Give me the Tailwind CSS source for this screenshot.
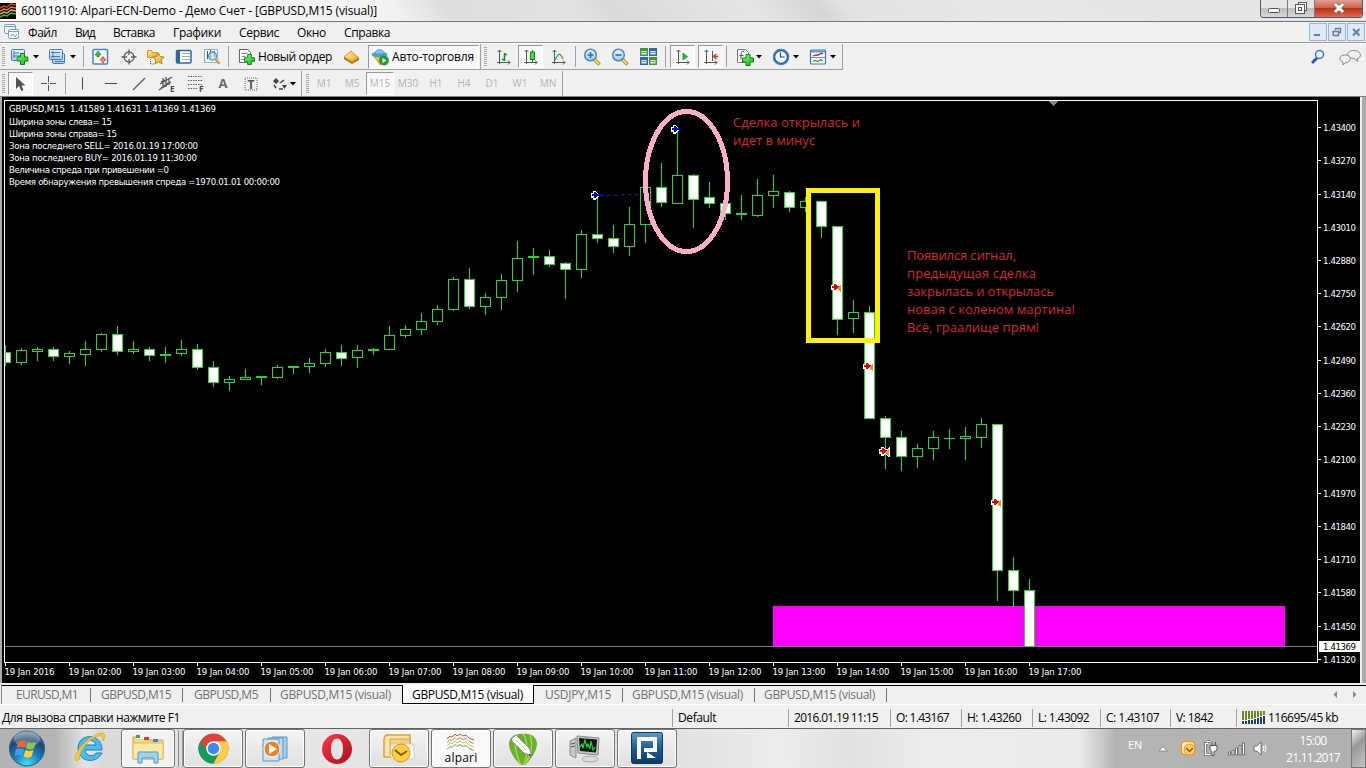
<!DOCTYPE html>
<html lang="ru">
<head>
<meta charset="utf-8">
<title>60011910: Alpari-ECN-Demo</title>
<script src="https://cdn.jsdelivr.net/npm/@tailwindcss/browser@4"></script>
</head>
<body class="w-[1366px] h-[768px] overflow-hidden bg-[#f0f0f0] font-['Open_Sans','Noto_Sans',sans-serif] text-[12px] text-black flex flex-col whitespace-nowrap">
<svg class="absolute w-0 h-0">
  <defs>
    <linearGradient id="gb" x1="0" y1="0" x2="0" y2="1"><stop offset="0" stop-color="#e8f3fd"/><stop offset="1" stop-color="#a9cbea"/></linearGradient>
    <linearGradient id="gg" x1="0" y1="0" x2="1" y2="1"><stop offset="0" stop-color="#7dff7d"/><stop offset="1" stop-color="#0bb80b"/></linearGradient>
    <linearGradient id="gy" x1="0" y1="0" x2="1" y2="1"><stop offset="0" stop-color="#fff0a0"/><stop offset="1" stop-color="#dfa318"/></linearGradient>
    <radialGradient id="orb" cx=".5" cy=".95" r=".95"><stop offset="0" stop-color="#3fe0ff"/><stop offset=".4" stop-color="#1b7fb8"/><stop offset=".75" stop-color="#1d4670"/><stop offset="1" stop-color="#7e9cb4"/></radialGradient>
    <linearGradient id="blu" x1="0" y1="0" x2="0" y2="1"><stop offset="0" stop-color="#5d9cc8"/><stop offset=".5" stop-color="#1f5d94"/><stop offset="1" stop-color="#0c3a68"/></linearGradient>
    <linearGradient id="red" x1="0" y1="0" x2="1" y2="1"><stop offset="0" stop-color="#ff3a46"/><stop offset="1" stop-color="#a80c1c"/></linearGradient>
    <symbol id="plus" viewBox="0 0 12 12"><path d="M4 .5h4v3.500h3.500v4H8v3.500H4V8H.5V4H4z" fill="url(#gg)" stroke="#0a7d14"/></symbol>
    <symbol id="axes"><path d="M3.500 1v14M1 13.500h13M1.500 3l2-2 2 2M12 11.500l2 2-2 2" fill="none" stroke="#555"/></symbol>
    <symbol id="lens"><path d="M11 11l5.500 5.500" stroke="#b08520" stroke-width="3.500"/><path d="M11 11l5 5" stroke="#ffe04a" stroke-width="1.800"/><circle cx="7.500" cy="7" r="5.800" fill="url(#gb)" stroke="#4a8ac4" stroke-width="1.500"/></symbol>
  </defs>
</svg>

<!-- title bar -->
<header class="h-[21px] shrink-0 flex items-center relative bg-[linear-gradient(52deg,#f8f8f8_0%,#f2f2f2_29%,#dedede_33%,#e2e2e2_42%,#dadada_45%,#e6e6e6_55%,#d6d6d6_60%,#e3e3e3_62%,#e8e8e8_72%,#e4e4e4_100%)]">
  <svg class="w-4 h-4 mt-[1px]" viewBox="0 0 16 16"><rect width="16" height="16" fill="#080808"/><g fill="none" stroke-width="1.500"><path d="M0 5l4-2 3 1 4-3 5 1" stroke="#d8451c"/><path d="M0 8l4-2 3 1 4-3 5 1" stroke="#e08020"/><path d="M0 11l4-2 3 1 4-3 5 1" stroke="#d6b525"/><path d="M0 14l4-2 3 1 4-3 5 1" stroke="#4faf28"/></g></svg>
  <span class="ml-[5px] leading-[20px]" data-w="356">60011910: Alpari-ECN-Demo - Демо Счет - [GBPUSD,M15 (visual)]</span>
  <div class="absolute right-[3px] top-0 h-[18px] flex border border-t-0 border-[#555a66] rounded-b-[4px] overflow-hidden">
    <div class="w-[27px] bg-[linear-gradient(#e6e6e6_0_45%,#bcbec2_50%,#d5d6da)] border-r border-[#777b84] grid place-items-center"><svg width="14" height="16"><rect x="1.500" y="7.500" width="11" height="4" rx="1" fill="#fff" stroke="#555"/></svg></div>
    <div class="w-[27px] bg-[linear-gradient(#e6e6e6_0_45%,#bcbec2_50%,#d5d6da)] border-r border-[#777b84] grid place-items-center"><svg width="14" height="16" fill="#f6f6f6" stroke="#555"><rect x="4.500" y="1.500" width="8" height="8"/><rect x="1.500" y="3.500" width="9" height="9"/><rect x="4.500" y="6.500" width="3" height="3"/></svg></div>
    <div class="w-[47px] bg-[linear-gradient(#e0a095,#d0604c_45%,#bb3018_50%,#dd6a50)] grid place-items-center"><svg width="14" height="16"><path d="M3 3l8 8M11 3l-8 8" stroke="#664" stroke-width="4.500"/><path d="M3 3l8 8M11 3l-8 8" stroke="#fff" stroke-width="3"/></svg></div>
  </div>
</header>

<!-- menu -->
<nav class="h-[22px] shrink-0 border-t border-b border-t-[#777] border-b-[#989898] flex items-center relative pt-[1px]">
  <svg class="w-[16px] h-[16px] ml-[4px] mr-[8px] mb-[1px]" viewBox="0 0 16 16" fill="#fff" stroke="#6da3dc"><rect x=".5" y=".5" width="11" height="9" rx="1.500"/><path d="M1 2.500h10"/><rect x="4.500" y="5.500" width="10" height="9" rx="1.500"/><path d="M5 7.500h9M6 11l2 1 1-2 2 3 2-3" fill="none"/></svg>
  <span class="w-[47px]" data-w="29">Файл</span><span class="w-[38px]" data-w="20">Вид</span><span class="w-[60px]" data-w="42">Вставка</span><span class="w-[66px]" data-w="48">Графики</span><span class="w-[58px]" data-w="40">Сервис</span><span class="w-[47px]" data-w="29">Окно</span><span class="w-[60px]" data-w="46">Справка</span>
  <div class="absolute right-[1px] top-[1px] flex gap-[1px] text-[#6b7d90]">
    <svg width="18" height="18"><rect x=".5" y=".5" width="17" height="17" fill="#dbeafa" stroke="#9db4cc"/><path d="M5 12h6" stroke="currentColor" stroke-width="2"/></svg>
    <svg width="18" height="18"><rect x=".5" y=".5" width="17" height="17" fill="#dbeafa" stroke="#9db4cc"/><path d="M7.500 7V5.500h5v4H11M5 8.500h5.500v4h-5z" fill="none" stroke="currentColor" stroke-width="1.500"/></svg>
    <svg width="18" height="18"><rect x=".5" y=".5" width="17" height="17" fill="#dbeafa" stroke="#9db4cc"/><path d="M6 6l6.500 6.500M12.500 6L6 12.500" stroke="currentColor" stroke-width="2"/></svg>
  </div>
</nav>

<!-- standard toolbar -->
<div class="h-[27px] shrink-0 flex items-stretch border-t border-white relative">
 <div class="w-[843px] flex items-center border-b border-r border-[#a0a0a0] *:shrink-0">
  <i class="ml-[2px] mr-[5px] w-[3px] h-[19px] bg-[repeating-linear-gradient(#a8a8a8_0_1px,#f0f0f0_1px_2px)]"></i>
  <svg width="20" height="18" viewBox="0 0 20 18"><rect x="1.500" y="1.500" width="13" height="11" rx="1" fill="url(#gb)" stroke="#3f78b5"/><path d="M4 3v7M3 8h8M4 5h5" stroke="#4a7fb5"/><use href="#plus" x="6.500" y="5" width="12" height="12"/></svg>
  <svg class="ml-[3px] mr-[9px]" width="6" height="4"><path d="M0 0h6l-3 3.500z"/></svg>
  <svg width="20" height="18" viewBox="0 0 20 18" fill="url(#gb)" stroke="#3f78b5"><rect x="4.500" y="5.500" width="12" height="10" rx="1"/><rect x="1.500" y="1.500" width="13" height="10" rx="1"/><path d="M3 4.500h9M3 8.500h9M5 3v7M7 13.500h9"/></svg>
  <svg class="ml-[2px] mr-[6px]" width="6" height="4"><path d="M0 0h6l-3 3.500z"/></svg>
  <i class="w-px h-[21px] bg-[#a0a0a0] ml-[1px] mr-[8px]"></i>
  <svg width="17" height="18" viewBox="0 0 17 18"><rect x="1" y="1.500" width="14.500" height="14.500" rx="1" fill="#fff" stroke="#3f86c8" stroke-width="1.500"/><path d="M3 7l3-4 3 4H7v2H5V7z" fill="#3bc43b" stroke="#168018" stroke-width=".7"/><path d="M8 11l3 4 3-4h-2V9h-2v2z" fill="#ff8a62" stroke="#c03010" stroke-width=".7"/></svg>
  <svg class="ml-[11px]" width="18" height="18" fill="none" stroke="#606060" stroke-width="1.300"><circle cx="9" cy="9" r="5"/><path d="M9 1.500V7M9 11v5.500M1.500 9H7M11 9h5.500"/></svg>
  <svg class="ml-[8px]" width="20" height="18" viewBox="0 0 20 18"><path d="M1.500 2.500h4l1 2h5v5h-10z" fill="url(#gy)" stroke="#c89a20"/><path d="M4.500 11v5h5" fill="none" stroke="#555" stroke-dasharray="1 1"/><path d="M12.500 5l1.700 3.600 4 .5-3 2.700.8 4-3.500-2-3.500 2 .8-4-3-2.700 4-.5z" fill="url(#gy)" stroke="#b8841a"/></svg>
  <svg class="ml-[9px]" width="18" height="18"><rect x="1.500" y="2.500" width="14.500" height="12.500" rx="1" fill="#fff" stroke="#2b66a8" stroke-width="1.500"/><path d="M3.500 3v12" stroke="#2b66a8" stroke-width="3"/><path d="M7 5.500h8M7 8.500h8M7 11.500h8" stroke="#9ab0c8"/></svg>
  <svg class="ml-[10px]" width="19" height="18"><rect x="1.500" y="1.500" width="13" height="13" fill="#f2f8fd" stroke="#8fb2d4"/><path d="M4.500 3v8M7.500 2v9M11.500 3v6" stroke="#555"/><circle cx="9.500" cy="8" r="4" fill="#bcdcf4aa" stroke="#5b90c4" stroke-width="1.300"/><path d="M12.500 11l4 5" stroke="#d9a521" stroke-width="2.500"/></svg>
  <i class="w-px h-[21px] bg-[#a0a0a0] ml-[6px] mr-[9px]"></i>
  <svg width="18" height="18"><path d="M1.500 1.500h8l3 3v10h-11z" fill="#fff" stroke="#666"/><path d="M3.500 5.500h6M3.500 8.500h4M3.500 11.500h3" stroke="#888"/><use href="#plus" x="6" y="6" width="11" height="11"/></svg>
  <span class="ml-[2px] w-[74px]" data-w="74">Новый ордер</span>
  <svg class="ml-[11px]" width="18" height="18"><path d="M1 9l7-6 8 7v2l-7 4-8-5z" fill="#a97212"/><path d="M1 9l7-6 8 7-7 4z" fill="url(#gy)" stroke="#c48a1a" stroke-width=".7"/></svg>
  <div class="ml-[7px] w-[111px] h-[24px] flex items-center border border-[#9a9a9a] border-r-white border-b-white bg-[#f8f8f8] pl-[2px]">
    <svg width="19" height="18"><path d="M2 7l7 10 6-9z" fill="#f4c828" stroke="#b88a18" stroke-width=".7"/><ellipse cx="8.500" cy="6.500" rx="8" ry="3" fill="#4ba2d8"/><path d="M4 6c0-6 9-6 9 0z" fill="#7cc6ec" stroke="#3a8cc4" stroke-width=".7"/><circle cx="13" cy="12.500" r="4.500" fill="#18a828" stroke="#0c7a18" stroke-width=".7"/><path d="M11.500 10l4 2.500-4 2.500z" fill="#fff"/></svg>
    <span class="ml-[2px]" data-w="82">Авто-торговля</span>
  </div>
  <i class="w-px h-full bg-[#a0a0a0] ml-[1px]"></i>
  <i class="ml-[3px] mr-[9px] w-[3px] h-[19px] bg-[repeating-linear-gradient(#a8a8a8_0_1px,#f0f0f0_1px_2px)]"></i>
  <svg width="16" height="16"><use href="#axes"/><path d="M8.500 4v8M6 10.500h2M9 5.500h2" stroke="#138a20" stroke-width="1.500"/></svg>
  <div class="ml-[6px] w-[25px] h-[23px] grid place-items-center border border-[#9a9a9a] border-r-white border-b-white bg-[#f8f8f8]"><svg width="16" height="16"><use href="#axes"/><path d="M9.500 1v12" stroke="#138a20"/><rect x="7.500" y="3" width="4" height="7.500" fill="#4ae04a" stroke="#138a20"/></svg></div>
  <svg class="ml-[8px]" width="16" height="16"><use href="#axes"/><path d="M4 11c4-8 5-7 8-1" stroke="#3fa84a" fill="none" stroke-width="1.300"/></svg>
  <i class="w-px h-[21px] bg-[#a0a0a0] ml-[8px] mr-[7px]"></i>
  <svg width="18" height="18"><use href="#lens"/><path d="M4.500 7h6M7.500 4v6" stroke="#2a70b8" stroke-width="1.600"/></svg>
  <svg class="ml-[10px]" width="18" height="18"><use href="#lens"/><path d="M4.500 7h6" stroke="#2a70b8" stroke-width="1.600"/></svg>
  <svg class="ml-[11px]" width="17" height="17"><path d="M0 0h8v8H0zM9 9h8v8H9z" fill="#3f9a2c"/><path d="M9 0h8v8H9zM0 9h8v8H0z" fill="#2b66b8"/><path d="M1.500 3h5v3.500h-5zM10.500 3h5v3.500h-5zM1.500 12h5v3.500h-5zM10.500 12h5v3.500h-5z" fill="#e8f2e4"/><path d="M2 4.500h4M11 4.500h4M2 13.500h4M11 13.500h4" stroke="#7a9a80"/></svg>
  <i class="w-px h-[21px] bg-[#a0a0a0] ml-[8px] mr-[4px]"></i>
  <div class="w-[25px] h-[23px] grid place-items-center border border-[#9a9a9a] border-r-white border-b-white bg-[#f8f8f8]"><svg width="16" height="16"><use href="#axes"/><path d="M8 4l4.500 3.500L8 11z" fill="#28b83a" stroke="#138a20" stroke-width=".7"/></svg></div>
  <div class="ml-[3px] w-[25px] h-[23px] grid place-items-center border border-[#9a9a9a] border-r-white border-b-white bg-[#f8f8f8]"><svg width="16" height="16"><use href="#axes"/><path d="M9.500 2v10" stroke="#555"/><path d="M15 7.500h-4M13.500 5l-3 2.500 3 2.500" stroke="#c8401c" stroke-width="1.500" fill="none"/></svg></div>
  <i class="w-px h-[21px] bg-[#a0a0a0] ml-[3px] mr-[9px]"></i>
  <svg width="18" height="18"><path d="M1.500 1.500h8l3 3v10h-11z" fill="#fff" stroke="#777"/><path d="M8 3.500c-3-1-3 1-3 7l-1 1M3.500 7.500h4" stroke="#555" fill="none"/><use href="#plus" x="6" y="6" width="12" height="12"/></svg>
  <svg class="ml-[2px]" width="6" height="4"><path d="M0 0h6l-3 3.500z"/></svg>
  <svg class="ml-[10px]" width="18" height="18"><circle cx="9" cy="9" r="7" fill="#f2f8fe" stroke="#1c62b4" stroke-width="2.500"/><circle cx="9" cy="9" r="7.500" fill="none" stroke="#5aa4e4" stroke-width=".7"/><path d="M8.500 4.500V9h4" stroke="#345" fill="none" stroke-width="1.200"/></svg>
  <svg class="ml-[3px]" width="6" height="4"><path d="M0 0h6l-3 3.500z"/></svg>
  <svg class="ml-[10px]" width="18" height="18"><rect x="1.500" y="2" width="15" height="14" rx="1" fill="#fff" stroke="#3a76b8" stroke-width="1.200"/><path d="M2 3.500h14" stroke="#5a96d4" stroke-width="2"/><path d="M4 8l3-1h2l3-1.500h2" stroke="#b02818" fill="none" stroke-width="1.300"/><path d="M2 9.500h14" stroke="#88a"/><path d="M4 13.500l2-1 3 1 3-2 2 1.500" stroke="#28a050" fill="none" stroke-width="1.300"/></svg>
  <svg class="ml-[3px]" width="6" height="4"><path d="M0 0h6l-3 3.500z"/></svg>
 </div>
 <div class="ml-auto mr-[4px] flex items-center gap-[12px]">
  <svg width="16" height="16"><path d="M2 14l5-5" stroke="#2456c0" stroke-width="2.800"/><circle cx="9.500" cy="5.500" r="4" fill="#f2f6ff" stroke="#3f72d8" stroke-width="1.500"/></svg>
  <svg width="24" height="18" fill="#f0f0f2" stroke="#8a8a8a"><path d="M16 2.500c8 0 8 7.500 3 8l1 3-4-3C7 10 8 2.500 16 2.500z"/><path d="M7 7c7 0 7 7 1 7.500L5 17v-3C0 12 1 7 7 7z"/></svg>
 </div>
</div>

<!-- line studies and periods toolbar -->
<div class="h-[26px] shrink-0 flex items-center text-[#6a6a6a] pt-[1px]">
  <i class="ml-[2px] mr-[3px] w-[3px] h-[19px] bg-[repeating-linear-gradient(#a8a8a8_0_1px,#f0f0f0_1px_2px)]"></i>
  <div class="w-[25px] h-[23px] grid place-items-center border border-[#9a9a9a] border-r-white border-b-white bg-[#f8f8f8]"><svg width="12" height="16"><path d="M1 1v12l3-3 2.500 5 2-1L6.500 9.500h4z" fill="#505050"/></svg></div>
  <svg class="ml-[7px]" width="17" height="17" stroke="#555"><path d="M8.500 1v6M8.500 10v6M1 8.500h6M10 8.500h6M8.500 8v1"/></svg>
  <i class="w-px h-[21px] bg-[#a0a0a0] ml-[8px] mr-[8px]"></i>
  <svg width="17" height="17" stroke="#444"><path d="M8.500 2.500v12"/></svg>
  <svg class="ml-[12px]" width="17" height="17" stroke="#444"><path d="M2 8.500h12"/></svg>
  <svg class="ml-[11px]" width="17" height="17" stroke="#555"><path d="M2 15L14 3" stroke-width="1.200"/></svg>
  <svg class="ml-[10px]" width="19" height="18" stroke="#555"><path d="M2 9L14 2M1 15l12-8M5 3v10M8 2v10M11 3v7M3 7l4-2M3 13l7-5" fill="none" stroke-width="1.300"/><text x="12" y="17" font-size="8" font-weight="700" fill="#444" stroke="none">E</text></svg>
  <svg class="ml-[10px]" width="19" height="18"><path d="M1 1.500h14M1 5.500h14M1 9.500h14M1 13.500h9" stroke="#666" stroke-dasharray="1.500 1"/><text x="12" y="17" font-size="8" font-weight="700" fill="#444">F</text></svg>
  <span class="ml-[11px] text-[13px] font-bold w-[12px] text-center">A</span>
  <svg class="ml-[14px]" width="16" height="16"><rect x="2" y="2" width="12" height="12" fill="none" stroke="#666" stroke-dasharray="1 1"/><text x="4.500" y="13" font-size="12" font-weight="700" fill="#555">T</text></svg>
  <svg class="ml-[12px]" width="17" height="16" fill="#444"><path d="M5 2l3 3-3 3-3-3zM11 9h5l-2.500 4z"/><path d="M3 9l2 3M9 7l4-3M8 13h4" stroke="#444" stroke-width="1.500"/></svg>
  <svg class="ml-[2px] mr-[5px]" width="6" height="4"><path d="M0 0h6l-3 3.500z" fill="#000"/></svg>
  <i class="w-px h-full bg-[#a0a0a0]"></i>
  <i class="ml-[4px] mr-[1px] w-[3px] h-[19px] bg-[repeating-linear-gradient(#a8a8a8_0_1px,#f0f0f0_1px_2px)]"></i>
  <div class="flex h-full items-center text-[10px] text-[#b4b4b4] border-r border-[#a0a0a0] *:w-[28px] *:text-center">
    <span>M1</span><span>M5</span><span class="h-[23px] leading-[21px] border border-[#9a9a9a] border-r-white border-b-white bg-[#f8f8f8]">M15</span><span>M30</span><span>H1</span><span>H4</span><span>D1</span><span>W1</span><span>MN</span>
  </div>
</div>

<!-- chart window -->
<main class="h-[588px] shrink-0 flex border-t border-[#808080] bg-[#ababab]">
  <svg id="chart" class="font-['DejaVu_Sans_Condensed','DejaVu_Sans',sans-serif]" width="1366" height="587" viewBox="0 97 1366 587" font-size="9.500" fill="#fff" shape-rendering="crispEdges">
    <rect x="2" y="97" width="1359" height="586" fill="#000"/>
    <rect x="1360" y="97" width="2" height="587" fill="#f0f0f0"/>
    <rect x="0" y="683" width="1366" height="1" fill="#f0f0f0"/>
    <rect x="773" y="606" width="512" height="40" fill="#f0f"/>
    <rect x="5" y="646" width="1312" height="1" fill="#778088"/>
    <path d="M1049 101h9v1h-1v1h-1v1h-1v1h-1v1h-1v-1h-1v-1h-1v-1h-1v-1h-1z" fill="#778899"/>
    <g id="candles"></g>
    <path d="M4.500 662.500v-562h1313v562z" fill="none" stroke="#fff"/>
    <g id="axis"></g>
    <g>
      <text x="9" y="112" textLength="207" xml:space="preserve">GBPUSD,M15  1.41589 1.41631 1.41369 1.41369</text>
      <text x="9" y="125" textLength="103">Ширина зоны слева= 15</text>
      <text x="9" y="137" textLength="108">Ширина зоны справа= 15</text>
      <text x="9" y="149" textLength="189">Зона последнего SELL= 2016.01.19 17:00:00</text>
      <text x="9" y="161" textLength="188">Зона последнего BUY= 2016.01.19 11:30:00</text>
      <text x="9" y="173" textLength="160">Величина спреда при привешении =0</text>
      <text x="9" y="185" textLength="271">Время обнаружения превышения спреда =1970.01.01 00:00:00</text>
    </g>
    <path d="M600 195.500L644 194.500" stroke="#1010c8" stroke-dasharray="4 3"/>
    <g id="marks"></g>
    <ellipse cx="686.500" cy="181.500" rx="41" ry="70" fill="none" stroke="#ffaec9" stroke-width="5"/>
    <rect x="808.500" y="190.500" width="69" height="150" fill="none" stroke="#fff200" stroke-width="5"/>
    <g class="font-['Open_Sans','Noto_Sans',sans-serif]" font-size="13" fill="#dc2329">
      <text x="733" y="127" textLength="127">Сделка открылась и</text>
      <text x="733" y="145" textLength="82">идет в минус</text>
      <text x="907" y="260" textLength="109">Появился сигнал,</text>
      <text x="907" y="278" textLength="129">предыдущая сделка</text>
      <text x="907" y="296" textLength="147">закрылась и открылась</text>
      <text x="907" y="314" textLength="168">новая с коленом мартина!</text>
      <text x="907" y="332" textLength="132">Всё, граалище прям!</text>
    </g>
  </svg>
</main>

<!-- chart tabs -->
<div class="h-[21px] shrink-0 flex text-[#707070] border-b border-white relative">
  <i class="w-[2px] border-r border-[#888]"></i>
  <div class="flex w-[400px] items-center border-t border-black mt-[1px]">
    <span class="ml-[14px] w-[74px]" data-w="62">EURUSD,M1</span><i class="w-px h-[14px] bg-[#777] mr-[10px]"></i>
    <span class="w-[81px]" data-w="70">GBPUSD,M15</span><i class="w-px h-[14px] bg-[#777] mr-[11px]"></i>
    <span class="w-[76px]" data-w="64">GBPUSD,M5</span><i class="w-px h-[14px] bg-[#777] mr-[9px]"></i>
    <span data-w="111">GBPUSD,M15 (visual)</span>
  </div>
  <div class="w-[132px] h-[19px] mt-[1px] bg-white border border-t-0 border-black text-black flex items-center pl-[9px] pt-[2px]"><span data-w="111">GBPUSD,M15 (visual)</span></div>
  <div class="flex flex-1 items-center border-t border-black mt-[1px]">
    <span class="ml-[11px] w-[77px]" data-w="66">USDJPY,M15</span><i class="w-px h-[14px] bg-[#777] mr-[9px]"></i>
    <span class="w-[122px]" data-w="111">GBPUSD,M15 (visual)</span><i class="w-px h-[14px] bg-[#777] mr-[9px]"></i>
    <span class="w-[122px]" data-w="111">GBPUSD,M15 (visual)</span><i class="w-px h-[14px] bg-[#777]"></i>
    <svg class="ml-auto mr-[8px] mb-[2px]" width="25" height="7" fill="#888"><path d="M4 0v7L.5 3.500zM20 0v7l3.500-3.500z"/></svg>
  </div>
</div>

<!-- status bar -->
<div class="h-[23px] shrink-0 flex items-center pl-[2px] pt-[2px] *:shrink-0">
  <span class="w-[670px]" data-w="178">Для вызова справки нажмите F1</span><i class="w-px h-[18px] bg-[#a0a0a0] mr-[5px]"></i>
  <span class="w-[110px]" data-w="38">Default</span><i class="w-px h-[18px] bg-[#a0a0a0] mr-[5px]"></i>
  <span class="w-[96px]" data-w="84">2016.01.19 11:15</span><i class="w-px h-[18px] bg-[#a0a0a0] mr-[5px]"></i>
  <span class="w-[65px]" data-w="53">O: 1.43167</span><i class="w-px h-[18px] bg-[#a0a0a0] mr-[5px]"></i>
  <span class="w-[65px]" data-w="54">H: 1.43260</span><i class="w-px h-[18px] bg-[#a0a0a0] mr-[5px]"></i>
  <span class="w-[62px]" data-w="51">L: 1.43092</span><i class="w-px h-[18px] bg-[#a0a0a0] mr-[5px]"></i>
  <span class="w-[64px]" data-w="53">C: 1.43107</span><i class="w-px h-[18px] bg-[#a0a0a0] mr-[5px]"></i>
  <span class="w-[60px]" data-w="37">V: 1842</span><i class="w-px h-[18px] bg-[#a0a0a0] mr-[5px]"></i>
  <svg width="24" height="14" shape-rendering="crispEdges"><path d="M1 0v9M4 0v8.500M7 0v8M10 0v7.500M13 0v6.500M16 0v5.500M19 0v4.500M22 0v3.500" stroke="#6f8a1c" stroke-width="2"/><path d="M1 10v3M4 10v3M7 9v4M10 8.500v4.500M13 7.500v5.500M16 6.500v6.500M19 5.500v7.500M22 4.500v8.500" stroke="#17426a" stroke-width="2"/></svg>
  <span class="ml-[2px]" data-w="70">116695/45 kb</span>
</div>

<!-- taskbar -->
<footer class="h-[40px] shrink-0 border-t border-[#5c665c] flex items-center relative bg-[linear-gradient(90deg,#b2b2b2_0,#b4b4b4_55px,#e4e4e4_85px,#d9d9d9_100px,#e6e6e6_300px,#e2e2e2_680px,#ececec_780px,#e2e2e2_850px,#ececec_930px,#eaeaea_1080px,#b4b4b4_1115px,#b0b0b0_1366px)]">
  <svg class="ml-[8px]" width="38" height="39" viewBox="0 0 38 39"><circle cx="19" cy="19.500" r="17.500" fill="url(#orb)" stroke="#2d5878"/><ellipse cx="19" cy="10" rx="13" ry="8" fill="#ffffff40"/><path d="M10 13c3-2 5-2 8-.5L16.500 19c-3-1.500-5-1.500-8 0z" fill="#f0642c"/><path d="M19.500 13c3 1.500 5 1.500 8.500 0l-2 6.500c-3 1.500-5 1.500-8 0z" fill="#8cc63e"/><path d="M8 20.500c3-1.500 5-1.500 8 0L14.500 27c-3-1.500-5-1.500-8 0z" fill="#3ca0e8"/><path d="M17.500 21c3 1.500 5 1.500 8 0l-2 6.500c-3 1.500-5 1.500-8 0z" fill="#ffd034"/></svg>
  <svg class="ml-[27px] mb-[4px]" width="34" height="34" viewBox="0 0 34 34"><path d="M29 20H12c1 7 9 7 11 3h6C23 35 5 32 5 18 5 3 29 2 29 20zM12 15h11c-1-6-10-6-11 0z" fill="#4bbcec" stroke="#1c80be"/><path d="M3 31C-2 24 18 3 29 3c4 0 3 5 1 8 0-4-1-6-5-5C15 9 4 24 7 29z" fill="#f6cc3c" stroke="#d4a01c" stroke-width=".6"/></svg>
  <div class="ml-[14px] w-[54px] h-[39px] border border-[#747474] rounded-[3px] bg-[#f2f2f2] shadow-[inset_0_0_0_1px_#fff] grid place-items-center">
    <svg width="34" height="32" viewBox="0 0 34 32"><path d="M2 4h10l2 3h18v19H2z" fill="#f2d87a" stroke="#c8a848"/><path d="M5 2h9v4H5z" fill="#fff"/><path d="M5 2h4v3H5z" fill="#2ea84a"/><path d="M13 4h5v3h-5z" fill="#d83a2c"/><path d="M22 6h5v3h-5z" fill="#3a80d8"/><path d="M2 10h30v16H2z" fill="#faeaa4" stroke="#d8bc60"/><path d="M7 30V20q0-1 1-1h18q1 0 1 1v10h-4v-5H11v5z" fill="#9cd4f0" stroke="#4a9cc8"/></svg>
  </div>
  <i class="w-[4px] h-[39px] border-r border-[#888] rounded-r-[3px] bg-[#e4e4e4]"></i><i class="w-[4px] h-[39px] border-r border-[#999] rounded-r-[3px] bg-[#dedede] mr-[-1px]"></i>
  <div class="ml-[1px] w-[60px] h-[39px] border border-[#747474] rounded-[3px] bg-[linear-gradient(#f4f4f4,#e0e0e0)] shadow-[inset_0_0_0_1px_#fff] grid place-items-center">
    <svg width="31" height="31" viewBox="0 0 32 32"><circle cx="16" cy="16" r="15.500" fill="#db4437"/><path d="M2.600 8.200A15.500 15.500 0 0 0 16 31.500L22.100 19.500H9.900z" fill="#0f9d58"/><path d="M29.500 8.500H16a7.500 7.500 0 0 1 6.500 11L16 31.500A15.500 15.500 0 0 0 29.500 8.500z" fill="#ffcd40"/><circle cx="16" cy="16" r="7.500" fill="#fff"/><circle cx="16" cy="16" r="6" fill="#4285f4"/></svg>
  </div>
  <div class="ml-[2px] w-[60px] h-[39px] border border-[#747474] rounded-[3px] bg-[linear-gradient(#f4f4f4,#e0e0e0)] shadow-[inset_0_0_0_1px_#fff] grid place-items-center">
    <svg width="30" height="30" viewBox="0 0 30 30"><path d="M12 3h15v21H12z" fill="#a8d0ec" stroke="#5a96c4"/><path d="M8 4h15v21H8z" fill="#b8dcf2" stroke="#5a96c4"/><path d="M3 5h16v22H3z" fill="#c8e4f6" stroke="#5a96c4"/><circle cx="12" cy="15" r="8" fill="#f08020" stroke="#fff" stroke-width="1"/><path d="M9 10l8 5-8 5z" fill="#fff"/></svg>
  </div>
  <svg class="ml-[16px]" width="32" height="32" viewBox="0 0 32 32"><path fill-rule="evenodd" d="M16 1a15 15 0 1 0 0 30 15 15 0 1 0 0-30zm0 4.500c4 0 6 5 6 10.500s-2 10.500-6 10.500-6-5-6-10.500 2-10.500 6-10.500z" fill="url(#red)"/></svg>
  <div class="ml-[16px] w-[60px] h-[39px] border border-[#747474] rounded-[3px] bg-[linear-gradient(#f4f4f4,#e0e0e0)] shadow-[inset_0_0_0_1px_#fff] grid place-items-center">
    <svg width="34" height="32" viewBox="0 0 34 32"><path d="M6 2h22v22H2V7q0-5 4-5z" fill="#f8e4b0" stroke="#e0a030" stroke-width="1.500"/><path d="M8 6h20v16H8z" fill="#f6d080" stroke="#e0a030"/><path d="M9 11h23v15H9z" fill="#fff" stroke="#ccc"/><path d="M9 11l11.500 8L32 11" stroke="#ccc" fill="none"/><circle cx="19" cy="20" r="9" fill="#fcd040" stroke="#d89818"/><path d="M13 17l6 5 6-4" stroke="#8a5c10" stroke-width="2" fill="none"/></svg>
  </div>
  <div class="ml-[2px] w-[60px] h-[39px] border border-[#747474] rounded-[3px] bg-[#fafafa] shadow-[inset_0_0_0_1px_#fff] flex flex-col items-center">
    <svg class="mt-[3px] shrink-0" width="30" height="18" fill="none" stroke-width=".9"><path d="M1 6l3-3 2 1 3-3 2 2 3-2 3 2 3-1 3 3 5 2" stroke="#c83a20"/><path d="M1 9.500l3-3 2 1 3-3 2 2 3-2 3 2 3-1 3 3 5 2" stroke="#e08030"/><path d="M1 13l3-3 2 1 3-3 2 2 3-2 3 2 3-1 3 3 5 2" stroke="#d8b838"/><path d="M1 16.500l3-3 2 1 3-3 2 2 3-2 3 2 3-1 3 3 5 2" stroke="#4fa040"/></svg>
    <span class="text-[12px] leading-[13px]" data-w="33">alpari</span>
  </div>
  <div class="ml-[2px] w-[60px] h-[39px] border border-[#747474] rounded-[3px] bg-[linear-gradient(#f4f4f4,#e0e0e0)] shadow-[inset_0_0_0_1px_#fff] grid place-items-center">
    <svg width="32" height="34" viewBox="0 0 32 34"><path d="M16 2c8-1 14 3 14 10S22 30 18 33h-4C10 30 2 20 2 12 2 5 9 1 16 2z" fill="#6cb02c"/><path d="M16 2c5 5 5 25 0 31M10 3C6 12 10 26 14 33M23 3c4 9 0 22-5 30" stroke="#a8dc60" fill="none" stroke-width="1.300"/><path d="M5 6l4-3 13 13 3 8-8-3L5 9z" fill="#fff" stroke="#668" stroke-width=".6"/><path d="M9 8l10 10" stroke="#ccc"/><path d="M22.500 21.500l2.500 2.500-3.500-1z" fill="#333"/></svg>
  </div>
  <div class="ml-[2px] w-[60px] h-[39px] border border-[#747474] rounded-[3px] bg-[linear-gradient(#f4f4f4,#e0e0e0)] shadow-[inset_0_0_0_1px_#fff] grid place-items-center">
    <svg width="34" height="32" viewBox="0 0 34 32"><path d="M2 8l6-3v20l-6-3z" fill="#c8c8c8" stroke="#888"/><path d="M3 11l4-1M3 14l4-1" stroke="#555"/><path d="M9 3l22 2-1 17-20-2z" fill="#c4c8cc" stroke="#888"/><path d="M11 5l18 1.500-1 13-16-1.500z" fill="#0c1a10"/><path d="M12 14l2-3 1 4 2-8 2 7 1-3 2 5 1-8 2 9 2-3" stroke="#22d84a" fill="none" stroke-width="1.100"/><ellipse cx="22" cy="26" rx="8" ry="3" fill="#dcdcdc" stroke="#aaa"/></svg>
  </div>
  <div class="ml-[2px] w-[60px] h-[39px] border border-[#747474] rounded-[3px] bg-[linear-gradient(#f4f4f4,#e0e0e0)] shadow-[inset_0_0_0_1px_#fff] grid place-items-center">
    <svg width="32" height="33"><rect x=".5" y=".5" width="31" height="31" rx="2" fill="url(#blu)" stroke="#0c3a68"/><path d="M8 27V7h16v11H13" fill="none" stroke="#fff" stroke-width="4"/><path d="M16 20l9 6h-9z" fill="#fff"/></svg>
  </div>
  <div class="ml-auto flex items-center text-white">
    <span class="mr-[16px] mb-[6px] text-[11px]" data-w="14" data-size="11">EN</span>
    <svg class="mr-[12px]" width="10" height="6"><path d="M5 .5l4 4.500H1z" fill="#fff" stroke="#777" stroke-width=".7"/></svg>
    <svg class="mr-[6px]" width="17" height="17"><rect x="1.500" y="1.500" width="13" height="13" rx="3" fill="#fdf0d0" stroke="#e49a2c" stroke-width="1.500"/><circle cx="9.500" cy="9.500" r="5.500" fill="#fccf60" stroke="#e09a20"/><path d="M6 8l3.500 3.500L13 8" stroke="#7a5410" fill="none" stroke-width="1.300"/></svg>
    <svg class="mr-[8px]" width="17" height="17"><path d="M5 3.500H2.500v11h5M4 1.500h3" stroke="#555" stroke-width="3" fill="none"/><path d="M5 3.500H2.500v11h5M4 1.500h3" stroke="#fff" stroke-width="1.500" fill="none"/><path d="M7 5.500h7v3q0 3-3 3v4H9v-4q-2-1-2-3zM9 5V2M12.500 5V2" fill="#fff" stroke="#555"/></svg>
    <svg class="mr-[8px]" width="17" height="14" fill="#fff" stroke="#555" stroke-width=".8"><path d="M.5 10h2v3h-2zM4 8h2v5H4zM7.500 6h2v7h-2zM11 3.500h2V13h-2zM14.500 1h2v12h-2z"/></svg>
    <svg class="mr-[19px]" width="14" height="16"><path d="M1 5h3l4-4v13l-4-4H1z" fill="#fff" stroke="#555" stroke-width=".8"/><path d="M10 5q2 2.500 0 5M12 4q2 3.500 0 7" stroke="#fff" fill="none"/></svg>
    <div class="w-[54px] flex flex-col items-center leading-[17px] mr-[11px]"><span data-w="27">15:00</span><span data-w="54">21.11.2017</span></div>
    <i class="w-[15px] h-[39px] border border-[#777] bg-[linear-gradient(135deg,#f2f2f2,#999_40%,#c4c4c4)]"></i>
  </div>
</footer>

<script>
// [high, body top, body bottom, low, kind]; w = bearish, b = bullish, g = flat
const bars = [
[345,352,363,366,'w'],[348,350,363,365,'b'],[347,349,352,361,'b'],[347,349,357,361,'w'],[351,353,357,364,'b'],[341,349,355,366,'b'],[333,334,350,352,'b'],[326,334,352,355,'w'],
[341,349,352,354,'b'],[347,349,356,361,'w'],[347,354,356,363,'g'],[340,349,354,356,'b'],[344,349,368,370,'w'],[361,367,383,387,'w'],[376,379,383,391,'b'],[369,377,380,380,'b'],
[376,376,378,385,'g'],[365,367,378,379,'b'],[366,366,368,374,'g'],[358,363,367,373,'b'],[349,352,364,367,'b'],[345,352,359,366,'w'],[345,350,358,368,'b'],[348,349,351,355,'g'],
[326,335,350,350,'b'],[325,329,336,338,'b'],[313,321,330,335,'b'],[305,309,322,325,'b'],[277,279,310,311,'b'],[268,279,307,309,'w'],[293,297,307,315,'b'],[274,280,298,310,'b'],
[241,258,281,292,'b'],[248,256,258,275,'g'],[250,256,265,267,'w'],[262,263,270,299,'w'],[230,234,270,278,'b'],[196,234,239,243,'w'],[225,238,247,253,'w'],[207,224,247,256,'b'],
[187,187,225,243,'b'],[163,187,203,207,'w'],[129,175,204,204,'b'],[174,175,200,228,'w'],[182,197,204,208,'w'],[203,203,214,220,'w'],[195,213,215,220,'g'],[179,195,216,217,'b'],
[175,191,196,208,'b'],[191,192,208,212,'w'],[197,201,208,212,'b'],[201,201,227,238,'w'],[226,226,320,335,'w'],[300,312,319,333,'b'],[306,312,419,419,'w'],[416,418,438,469,'w'],
[431,437,457,471,'w'],[444,448,457,468,'b'],[431,437,449,460,'b'],[429,438,439,449,'g'],[427,436,439,460,'b'],[418,424,438,448,'b'],[424,424,571,601,'w'],[557,570,591,607,'w'],[579,590,647,647,'w']];
const fills = {w: '#fff', b: '#000', g: '#14e614'};
let s = '';
bars.forEach(([h, t, b, l, k], i) => {
  const x = 5 + 16 * i, left = Math.max(x - 5, 5);
  s += `<rect x="${x}" y="${h}" width="1" height="${l - h}" fill="#1fdc1f"/>`;
  s += `<rect x="${left}" y="${t}" width="${x + 6 - left}" height="${b - t}" fill="#1fdc1f"/>`;
  if (b - t > 2) s += `<rect x="${left + 1}" y="${t + 1}" width="${x + 4 - left}" height="${b - t - 2}" fill="${fills[k]}"/>`;
});
document.getElementById('candles').innerHTML = s;

s = '';
for (let k = 0; k < 17; k++) {
  const y = Math.floor(127.6 + 33.23 * k);
  s += `<rect x="1318" y="${y}" width="3" height="1"/><text x="1323" y="${y + 4}" textLength="33">${(1.434 - 0.0013 * k).toFixed(5)}</text>`;
  const hour = String(k + 1).padStart(2, '0');
  s += `<rect x="${5 + 64 * k}" y="663" width="1" height="3"/><text x="${4.5 + 64 * k}" y="675" textLength="${k ? 53 : 50}">19 Jan ${k ? hour + ':00' : '2016'}</text>`;
}
s += '<rect x="1319" y="641" width="41" height="11"/><text x="1323" y="650" textLength="33" fill="#000">1.41369</text>';
document.getElementById('axis').innerHTML = s;

s = '';
const arrow = (x, y, c) =>
  `<path d="M${x - 1} ${y - 2}h2v-2h3v1h1v1h1v1h1v3h-1v1h-1v1h-1v1h-3v-2h-2z" fill="#fff"/>` +
  `<path d="M${x} ${y - 1}h2v-2h2v1h1v1h2v2h-2v1h-1v1h-2v-2h-2z" fill="${c}"/>`;
[[592, 195], [672, 129]].forEach(([x, y]) => { s += arrow(x, y, '#0000e0') + `<rect x="${x + 4}" y="${y - 1}" width="5" height="1" fill="#0000e0"/>`; });
[[832, 287], [864, 366], [880, 451], [992, 502]].forEach(([x, y]) => {
  if (x === 880) s += `<path d="M${x + 10} ${y - 4}v10h-2l-4-4v-2z" fill="#fff"/>`;
  s += arrow(x, y, '#e00000') + `<path d="M${x + 9} ${y - 2}v7l-4-3.500z" fill="#d29b3c"/>`;
});
document.getElementById('marks').innerHTML = s;

const pen = document.createElement('canvas').getContext('2d');
document.querySelectorAll('[data-w]').forEach(el => {
  pen.font = (el.dataset.size || 12) + 'px "Open Sans"';
  const text = el.textContent;
  el.style.letterSpacing = (el.dataset.w - pen.measureText(text).width) / text.length + 'px';
});
</script>
</body>
</html>
